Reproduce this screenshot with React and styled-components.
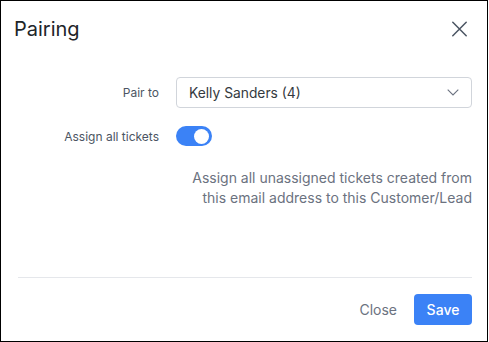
import React from "react";
import styled, { createGlobalStyle } from "styled-components";

const Global = createGlobalStyle`
  html, body { margin: 0; padding: 0; background: #fff; }
  body { font-family: Inter, "Noto Sans", sans-serif; }
  * { box-sizing: border-box; }
`;

const Frame = styled.div`
  width: 488px;
  height: 342px;
  border: 1px solid #000;
  background: #fff;
  display: flex;
  flex-direction: column;
`;

const Header = styled.div`
  height: 56px;
  display: flex;
  align-items: center;
  justify-content: space-between;
  padding: 0 20px 0 13px;
`;

const Title = styled.h2`
  margin: 0;
  font-size: 20px;
  line-height: 1;
  font-weight: 400;
  color: #212529;
`;

const CloseIcon = styled.button`
  border: 0;
  background: none;
  padding: 0;
  width: 15px;
  height: 16px;
  display: flex;
  cursor: pointer;
  color: #4b5563;
`;

const Body = styled.div`
  padding: 20px 15px 0 17px;
  display: grid;
  grid-template-columns: 141px 1fr;
  column-gap: 17px;
  align-items: center;
`;

const Label = styled.label`
  text-align: right;
  font-size: 12px;
  color: #4b5563;
  margin-top: ${(p) => p.$mt || 0}px;
`;

const Select = styled.div`
  height: 31px;
  border: 1px solid #d1d5db;
  border-radius: 4px;
  display: flex;
  align-items: center;
  justify-content: space-between;
  padding: 0 12px 0 12px;
  font-size: 13.8px;
  color: #343a40;
`;

const Toggle = styled.div`
  margin-top: 18px;
  width: 36px;
  height: 20px;
  border-radius: 10px;
  background: #3b82f6;
  position: relative;
`;

const Knob = styled.span`
  position: absolute;
  top: 2.5px;
  right: 3px;
  width: 15px;
  height: 15px;
  border-radius: 50%;
  background: #fff;
`;

const Help = styled.p`
  grid-column: 2;
  margin: 22px 0 0;
  text-align: right;
  font-size: 14px;
  line-height: 20px;
  color: #6b7280;
`;

const Footer = styled.div`
  margin: auto 15px 0 17px;
  border-top: 1px solid #e5e7eb;
  padding: 16px 0 16px;
  display: flex;
  justify-content: flex-end;
  align-items: center;
  gap: 5px;
`;

const Button = styled.button`
  height: 31px;
  border: 0;
  border-radius: 4px;
  font-family: Inter, "Noto Sans", sans-serif;
  font-size: 14px;
  padding: 0 12px;
  cursor: pointer;
  background: ${(p) => (p.$primary ? "#3b82f6" : "transparent")};
  color: ${(p) => (p.$primary ? "#fff" : "#6b7280")};
  font-weight: ${(p) => (p.$primary ? 500 : 400)};
  width: ${(p) => (p.$primary ? "58px" : "auto")};
`;

export default function App() {
  return (
    <>
      <Global />
      <Frame>
        <Header>
          <Title>Pairing</Title>
          <CloseIcon aria-label="Close">
            <svg width="15" height="16" viewBox="0 0 15 16" fill="none">
              <path d="M0.8 1.2 L14.2 14.8 M14.2 1.2 L0.8 14.8" stroke="currentColor" strokeWidth="1.5" strokeLinecap="round" />
            </svg>
          </CloseIcon>
        </Header>
        <Body>
          <Label>Pair to</Label>
          <Select>
            <span>Kelly Sanders (4)</span>
            <svg width="12" height="7" viewBox="0 0 12 7" fill="none">
              <path d="M0.7 0.7 L6 6 L11.3 0.7" stroke="#6b7280" strokeWidth="1.1" />
            </svg>
          </Select>
          <Label $mt={18}>Assign all tickets</Label>
          <Toggle>
            <Knob />
          </Toggle>
          <Help>
            Assign all unassigned tickets created from this email address to this Customer/Lead
          </Help>
        </Body>
        <Footer>
          <Button>Close</Button>
          <Button $primary>Save</Button>
        </Footer>
      </Frame>
    </>
  );
}
